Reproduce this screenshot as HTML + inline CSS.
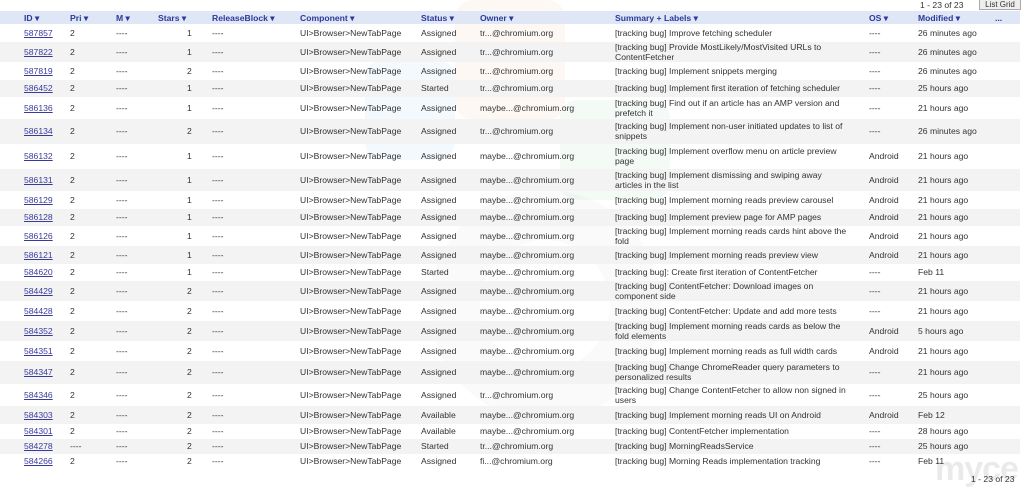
<!DOCTYPE html>
<html><head><meta charset="utf-8"><style>
body{margin:0;width:1024px;height:489px;background:#fff;position:relative;overflow:hidden;font-family:"Liberation Sans",Arial,sans-serif;font-size:8.6px;color:#333}
.r{position:absolute;left:0;width:1020px}
.r span{position:absolute;top:50%;transform:translateY(-50%);white-space:nowrap;line-height:10px}
.g{background:#f3f3f3}
.h{background:#dfe6f6;color:#2b3a9a;font-weight:bold}
a{color:#3a3a9c;text-decoration:underline}
.wm{position:absolute;opacity:.05;border-radius:18px}
</style></head><body>
<div class="wm" style="left:365px;top:60px;width:90px;height:100px;background:#2a8ad0"></div>
<div class="wm" style="left:455px;top:0px;width:110px;height:120px;background:#f07020"></div>
<div class="wm" style="left:560px;top:100px;width:110px;height:100px;background:#2aa040"></div>
<div class="wm" style="left:430px;top:190px;width:230px;height:230px;border-radius:50%;border:50px solid #888;opacity:.045;box-sizing:border-box"></div>
<div style="position:absolute;left:920px;top:0;font-size:8.6px;color:#333">1 - 23 of 23</div>
<div style="position:absolute;left:979px;top:-1px;width:40px;height:9px;border:1px solid #aaa;background:#eee;font-size:8px;line-height:9px;color:#333;text-align:center">List Grid</div>
<div id="t"></div>
<div style="position:absolute;left:935px;top:450px;font-size:34px;color:#000;opacity:.08;font-weight:bold;letter-spacing:-1px">myce</div>
<div style="position:absolute;left:971px;top:474px;font-size:8.6px">1 - 23 of 23</div>
<script>
var b=[24,41.5,61.5,79.5,96.5,118.5,143.5,168.5,191,208.5,226,246,263.5,281,301,321,341,361,383.5,406,423.5,438.5,453.5,469];
var d=[
["587857","2","1","Assigned","tr...@chromium.org","[tracking bug] Improve fetching scheduler","----","26 minutes ago"],
["587822","2","1","Assigned","tr...@chromium.org","[tracking bug] Provide MostLikely/MostVisited URLs to<br>ContentFetcher","----","26 minutes ago"],
["587819","2","2","Assigned","tr...@chromium.org","[tracking bug] Implement snippets merging","----","26 minutes ago"],
["586452","2","1","Started","tr...@chromium.org","[tracking bug] Implement first iteration of fetching scheduler","----","25 hours ago"],
["586136","2","1","Assigned","maybe...@chromium.org","[tracking bug] Find out if an article has an AMP version and<br>prefetch it","----","21 hours ago"],
["586134","2","2","Assigned","tr...@chromium.org","[tracking bug] Implement non-user initiated updates to list of<br>snippets","----","26 minutes ago"],
["586132","2","1","Assigned","maybe...@chromium.org","[tracking bug] Implement overflow menu on article preview<br>page","Android","21 hours ago"],
["586131","2","1","Assigned","maybe...@chromium.org","[tracking bug] Implement dismissing and swiping away<br>articles in the list","Android","21 hours ago"],
["586129","2","1","Assigned","maybe...@chromium.org","[tracking bug] Implement morning reads preview carousel","Android","21 hours ago"],
["586128","2","1","Assigned","maybe...@chromium.org","[tracking bug] Implement preview page for AMP pages","Android","21 hours ago"],
["586126","2","1","Assigned","maybe...@chromium.org","[tracking bug] Implement morning reads cards hint above the<br>fold","Android","21 hours ago"],
["586121","2","1","Assigned","maybe...@chromium.org","[tracking bug] Implement morning reads preview view","Android","21 hours ago"],
["584620","2","1","Started","maybe...@chromium.org","[tracking bug]: Create first iteration of ContentFetcher","----","Feb 11"],
["584429","2","2","Assigned","maybe...@chromium.org","[tracking bug] ContentFetcher: Download images on<br>component side","----","21 hours ago"],
["584428","2","2","Assigned","maybe...@chromium.org","[tracking bug] ContentFetcher: Update and add more tests","----","21 hours ago"],
["584352","2","2","Assigned","maybe...@chromium.org","[tracking bug] Implement morning reads cards as below the<br>fold elements","Android","5 hours ago"],
["584351","2","2","Assigned","maybe...@chromium.org","[tracking bug] Implement morning reads as full width cards","Android","21 hours ago"],
["584347","2","2","Assigned","maybe...@chromium.org","[tracking bug] Change ChromeReader query parameters to<br>personalized results","----","21 hours ago"],
["584346","2","2","Assigned","tr...@chromium.org","[tracking bug] Change ContentFetcher to allow non signed in<br>users","----","25 hours ago"],
["584303","2","2","Available","maybe...@chromium.org","[tracking bug] Implement morning reads UI on Android","Android","Feb 12"],
["584301","2","2","Available","maybe...@chromium.org","[tracking bug] ContentFetcher implementation","----","28 hours ago"],
["584278","----","2","Started","tr...@chromium.org","[tracking bug] MorningReadsService","----","25 hours ago"],
["584266","2","2","Assigned","fi...@chromium.org","[tracking bug] Morning Reads implementation tracking","----","Feb 11"]];
var h='<div class="r h" style="top:11px;height:13px"><span style="left:24px">ID ▾</span><span style="left:70px">Pri ▾</span><span style="left:116px">M ▾</span><span style="left:158px">Stars ▾</span><span style="left:212px">ReleaseBlock ▾</span><span style="left:300px">Component ▾</span><span style="left:421px">Status ▾</span><span style="left:480px">Owner ▾</span><span style="left:615px">Summary + Labels ▾</span><span style="left:869px">OS ▾</span><span style="left:918px">Modified ▾</span><span style="left:995px">...</span></div>';
d.forEach(function(r,i){
h+='<div class="r'+(i%2?' g':'')+'" style="top:'+b[i]+'px;height:'+(b[i+1]-b[i])+'px"><span style="left:24px"><a>'+r[0]+'</a></span><span style="left:70px">'+r[1]+'</span><span style="left:116px">----</span><span style="left:187px">'+r[2]+'</span><span style="left:212px">----</span><span style="left:300px">UI&gt;Browser&gt;NewTabPage</span><span style="left:421px">'+r[3]+'</span><span style="left:480px">'+r[4]+'</span><span style="left:615px">'+r[5]+'</span><span style="left:869px">'+r[6]+'</span><span style="left:918px">'+r[7]+'</span></div>';});
document.getElementById('t').innerHTML=h;
</script>
</body></html>
